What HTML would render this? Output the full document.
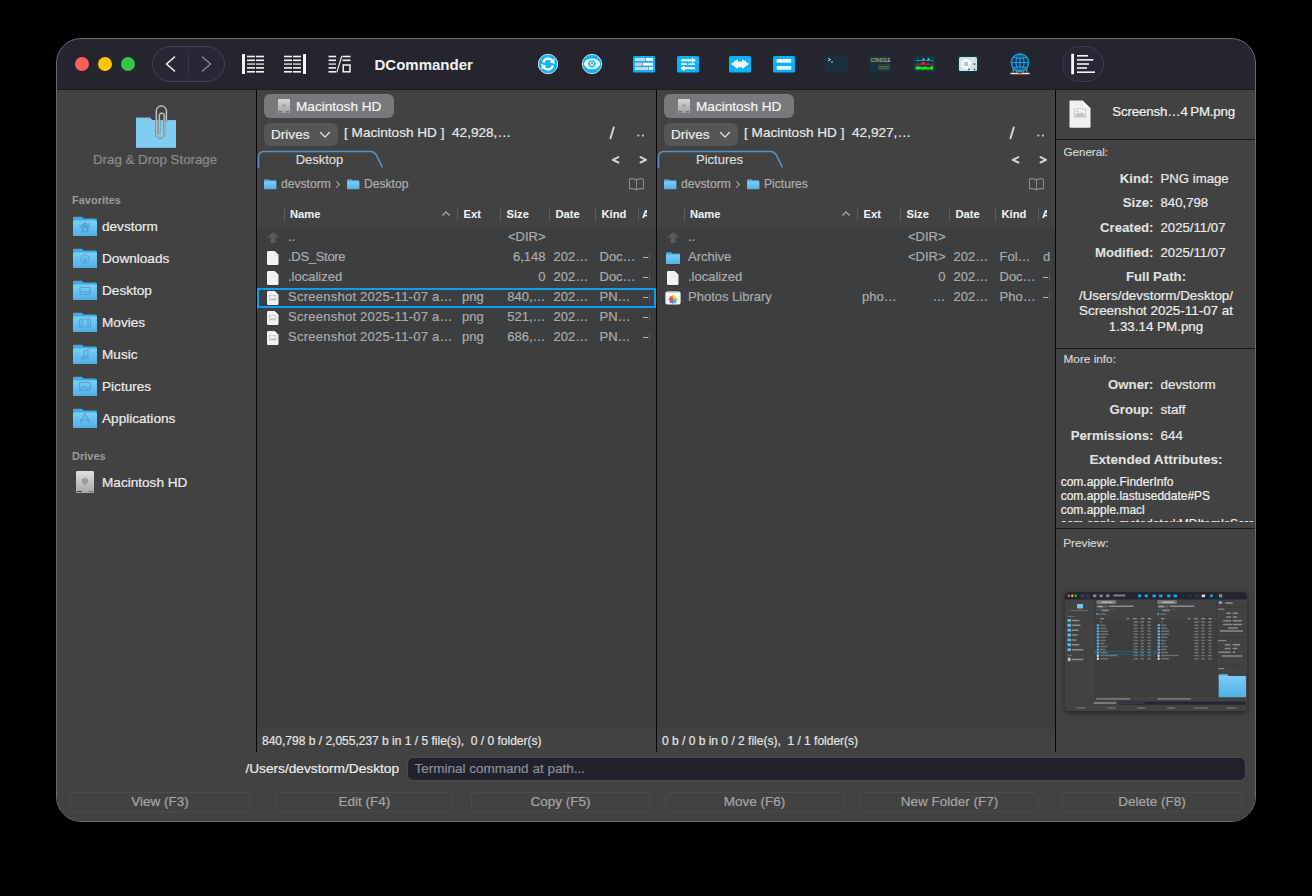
<!DOCTYPE html>
<html><head><meta charset="utf-8">
<style>
html,body{margin:0;padding:0}
body{width:1312px;height:896px;background:#000;position:relative;overflow:hidden;font-family:"Liberation Sans",sans-serif;color:#e6e6e6}
#win{position:absolute;left:57px;top:39px;width:1198px;height:782px;border-radius:24px;overflow:hidden;background:#424242}
#in{position:absolute;left:-57px;top:-39px;width:1312px;height:896px}
#border{position:absolute;left:56px;top:38px;width:1198px;height:782px;border:1px solid #6a6a6e;border-radius:25px;pointer-events:none}
.a{position:absolute}
.t{position:absolute;white-space:nowrap;line-height:20px;-webkit-text-stroke:0.2px currentColor}
.t[style*="font-weight:700"]{-webkit-text-stroke:0.05px currentColor}
.sep{position:absolute;background:#060606}
</style></head><body>
<div id="win"><div id="in">
  <!-- title bar -->
  <div class="a" style="left:0;top:39px;width:1312px;height:50px;background:#252530"></div>
  <div class="a" style="left:0;top:89px;width:1312px;height:1px;background:#1c1c1f"></div>

  <!-- sidebar -->
  <div class="a" style="left:57px;top:90px;width:199px;height:662px;background:#424242"></div>
  <!-- panels bg -->
  <div class="a" style="left:257px;top:90px;width:399px;height:137px;background:#424242"></div>
  <div class="a" style="left:257px;top:227px;width:399px;height:502px;background:#3d3e40"></div>
  <div class="a" style="left:657px;top:90px;width:398px;height:137px;background:#424242"></div>
  <div class="a" style="left:657px;top:227px;width:398px;height:502px;background:#3d3e40"></div>
  <div class="a" style="left:1056px;top:90px;width:199px;height:662px;background:#424242"></div>

  <!-- TITLEBAR CONTENT -->
  <svg class="a" style="left:0;top:39px" width="1312" height="50" viewBox="0 39 1312 50">
    <circle cx="82" cy="64" r="7" fill="#fe5f57"/>
    <circle cx="105" cy="64" r="7" fill="#fdc600"/>
    <circle cx="128" cy="64" r="7" fill="#33c748"/>
    <rect x="152.5" y="46.5" width="72" height="35" rx="17.5" fill="#272735" stroke="#40405e" stroke-width="1"/>
    <line x1="188.5" y1="54" x2="188.5" y2="74" stroke="#3c3c48" stroke-width="1"/>
    <polyline points="174.5,57 166.5,64 174.5,71" fill="none" stroke="#f2f2f2" stroke-width="1.6" stroke-linecap="round" stroke-linejoin="round"/>
    <polyline points="202.5,57 210.5,64 202.5,71" fill="none" stroke="#85858e" stroke-width="1.6" stroke-linecap="round" stroke-linejoin="round"/>
    <!-- icon1 -->
    <g fill="#f4f4f4">
      <rect x="242" y="54" width="3" height="20" rx="0.5"/>
      <rect x="247" y="55.7" width="8" height="1.6"/><rect x="256" y="55.7" width="8" height="1.6"/>
      <rect x="247" y="59.5" width="8" height="1.6"/><rect x="256" y="59.5" width="8" height="1.6"/>
      <rect x="247" y="63.3" width="8" height="1.6" fill="#c4c4c4"/><rect x="256" y="63.3" width="8" height="1.6" fill="#c4c4c4"/>
      <rect x="247" y="67.1" width="8" height="1.6"/><rect x="256" y="67.1" width="8" height="1.6"/>
      <rect x="247" y="71" width="8" height="1.6"/><rect x="256" y="71" width="8" height="1.6"/>
    </g>
    <!-- icon2 -->
    <g fill="#f4f4f4">
      <rect x="303" y="54" width="3" height="20" rx="0.5"/>
      <rect x="284" y="55.7" width="8" height="1.6"/><rect x="293" y="55.7" width="8" height="1.6"/>
      <rect x="284" y="59.5" width="8" height="1.6"/><rect x="293" y="59.5" width="8" height="1.6"/>
      <rect x="284" y="63.3" width="8" height="1.6" fill="#c4c4c4"/><rect x="293" y="63.3" width="8" height="1.6" fill="#c4c4c4"/>
      <rect x="284" y="67.1" width="8" height="1.6"/><rect x="293" y="67.1" width="8" height="1.6"/>
      <rect x="284" y="71" width="8" height="1.6"/><rect x="293" y="71" width="8" height="1.6"/>
    </g>
    <!-- icon3 -->
    <g fill="#f4f4f4">
      <rect x="328.5" y="55.7" width="7.5" height="1.6"/>
      <rect x="328.5" y="59.5" width="7.5" height="1.6"/>
      <rect x="328.5" y="63.3" width="7.5" height="1.6" fill="#c4c4c4"/>
      <rect x="328.5" y="67.1" width="7.5" height="1.6"/>
      <rect x="328.5" y="71" width="7.5" height="1.6"/>
      <rect x="342.5" y="55.7" width="8" height="1.6"/>
      <rect x="342.5" y="59.5" width="8" height="1.6"/>
      <rect x="343.2" y="65" width="6.8" height="6.8" fill="none" stroke="#f4f4f4" stroke-width="1.5"/>
    </g>
    <line x1="336.8" y1="72.3" x2="341.8" y2="56" stroke="#f4f4f4" stroke-width="1.1"/>
    <!-- refresh -->
    <circle cx="548" cy="64" r="9.7" fill="#0ab2fb" stroke="#ece8e4" stroke-width="0.9"/>
    <path d="M543.2,62.6 A5,5 0 0 1 552.2,60.6" fill="none" stroke="#fff" stroke-width="2.5"/>
    <path d="M552.8,65.4 A5,5 0 0 1 543.8,67.4" fill="none" stroke="#fff" stroke-width="2.5"/>
    <polygon points="554.3,58.6 554.6,64 549.8,62.2" fill="#fff"/>
    <polygon points="541.7,69.4 541.4,64 546.2,65.8" fill="#fff"/>
    <!-- eye -->
    <circle cx="592" cy="64" r="9.7" fill="#0ab2fb" stroke="#ece8e4" stroke-width="0.9"/>
    <path d="M583.8,64 C585.8,56.8 598.2,56.8 600.2,64 C598.2,71.2 585.8,71.2 583.8,64Z" fill="#eef7fc"/>
    <circle cx="592" cy="63.8" r="2.9" fill="none" stroke="#0ab2fb" stroke-width="1.4"/>
    <circle cx="592" cy="63.5" r="1.1" fill="#0ab2fb"/>
    <!-- blue rect icons -->
    <g>
      <rect x="633" y="56" width="22" height="16.5" rx="1.5" fill="#0ab2fb"/>
      <rect x="635.2" y="58" width="17.6" height="2.8" fill="#fff"/><rect x="635.2" y="58" width="10.4" height="2.8" fill="#c9d3da"/><rect x="645.4" y="57.4" width="0.6" height="4" fill="#5a6870"/>
      <rect x="635.2" y="62.8" width="17.6" height="2.8" fill="#fff"/><rect x="635.2" y="62.8" width="7.2" height="2.8" fill="#bfcbd3"/><rect x="642.2" y="62.2" width="0.6" height="4" fill="#5a6870"/>
      <rect x="635.2" y="67" width="17.6" height="2.8" fill="#fff"/><rect x="635.2" y="67" width="13.4" height="2.8" fill="#c9d3da"/><rect x="648.4" y="66.4" width="0.6" height="4" fill="#5a6870"/>
    </g>
    <g>
      <rect x="677" y="56" width="22" height="16.5" rx="1.5" fill="#0ab2fb"/>
      <rect x="681" y="59.3" width="11.5" height="2" fill="#fff"/><polygon points="692,57.6 696,60.3 692,63" fill="#fff"/>
      <rect x="681" y="63.3" width="6" height="1.6" fill="#fff"/><rect x="688.5" y="63.3" width="6.5" height="1.6" fill="#fff"/>
      <rect x="684" y="67.2" width="11" height="2" fill="#fff"/><polygon points="684.5,65.5 680.5,68.2 684.5,71" fill="#fff"/>
    </g>
    <g>
      <rect x="729" y="56" width="22" height="16.5" rx="1.5" fill="#0ab2fb"/>
      <polygon points="730.7,64.1 737.9,59 737.9,61.6 742.2,61.6 742.2,59 749.2,64.1 742.2,69.1 742.2,67.2 737.9,67.2 737.9,69.1" fill="#eef4f8"/>
    </g>
    <g>
      <rect x="773" y="56" width="22" height="16.5" rx="1.5" fill="#0ab2fb"/>
      <rect x="776.7" y="59" width="14.5" height="3.7" fill="#f6f9fb"/>
      <rect x="776.7" y="66" width="14.5" height="3.7" fill="#e6f0f6"/>
    </g>
    <!-- dark icons -->
    <g>
      <rect x="825.5" y="55.8" width="21.5" height="16.5" rx="1.5" fill="#183040" stroke="#22343e" stroke-width="0.6"/>
      <polyline points="828,58.3 830.5,59.6 828,61" fill="none" stroke="#e6eef2" stroke-width="0.9"/>
      <rect x="831" y="61.5" width="2" height="1" fill="#c8d0d4"/>
    </g>
    <g>
      <rect x="869.5" y="55.8" width="21.5" height="16.5" rx="1.5" fill="#183040" stroke="#22343e" stroke-width="0.6"/>
      <text x="870.6" y="62.4" font-family="Liberation Sans" font-size="5" fill="#e6de7c" textLength="19.6" lengthAdjust="spacingAndGlyphs">CONSOLE</text>
      <rect x="878.5" y="64.4" width="11" height="0.5" fill="#4d5a3a"/>
      <rect x="878.5" y="66" width="11" height="1" fill="#6a7440"/>
      <rect x="878.5" y="67.8" width="11" height="1" fill="#6a7440"/>
      <rect x="878.5" y="69.6" width="11" height="0.5" fill="#4d5a3a"/>
    </g>
    <g>
      <rect x="913.5" y="55.8" width="21.5" height="16.5" rx="1.5" fill="#183040" stroke="#22343e" stroke-width="0.6"/>
      <g stroke="#3d6a78" stroke-width="0.5"><line x1="918" y1="57" x2="918" y2="71"/><line x1="923" y1="57" x2="923" y2="71"/><line x1="928" y1="57" x2="928" y2="71"/><line x1="933" y1="57" x2="933" y2="71"/></g>
      <rect x="915.5" y="60" width="17.5" height="0.6" fill="#35c8d8"/>
      <path d="M922,60 L923.5,57.8 L925,60Z M927,60 L928.5,57.6 L930,60Z" fill="#35c8d8"/>
      <rect x="915.5" y="64.3" width="17.5" height="0.6" fill="#e01818"/>
      <path d="M920,64.5 Q922,60.8 924,62 Q925.5,62.5 926,64.5Z M926.5,64.5 Q928,61.5 930,64.5Z" fill="#ee1c1c"/>
      <path d="M915.5,69.4 L915.5,66.8 Q917,65.8 918.5,66.6 Q920,65.6 921,66.8 Q922.5,67.6 924.5,66.4 Q926,65.8 927,67.2 Q929,68 930.5,66.4 Q932,65.8 933,66.2 L933,69.4Z" fill="#18e818"/>
    </g>
    <g>
      <rect x="957.5" y="55.8" width="21.5" height="16.5" rx="1.5" fill="#183040" stroke="#22343e" stroke-width="0.6"/>
      <rect x="959" y="57" width="18" height="14" rx="1.5" fill="#d4e0ea"/>
      <circle cx="966" cy="64" r="5.2" fill="#f4f8fb"/>
      <circle cx="966" cy="64" r="1.6" fill="none" stroke="#6a8296" stroke-width="0.8"/>
      <circle cx="974.5" cy="64" r="0.95" fill="#3f5a72"/>
      <circle cx="969" cy="69.5" r="0.9" fill="#3f5a72"/>
      <circle cx="974.5" cy="69.5" r="0.9" fill="#3f5a72"/>
    </g>
    <!-- globe -->
    <g>
      <rect x="1010.5" y="72.8" width="19" height="1.5" fill="#e6d8d2"/>
      <rect x="1018.8" y="72.8" width="2.4" height="1.5" fill="#e05040"/>
      <g stroke="#7ed0a8" stroke-width="0.8"><line x1="1013.3" y1="67" x2="1013.3" y2="73"/><line x1="1026.7" y1="67" x2="1026.7" y2="73"/><line x1="1016.3" y1="70" x2="1016.3" y2="73"/><line x1="1023.7" y1="70" x2="1023.7" y2="73"/></g>
      <circle cx="1020" cy="62.6" r="8.7" fill="#1e8ed8" fill-opacity="0.18" stroke="#14a6f0" stroke-width="1.4"/>
      <g fill="none" stroke="#14a6f0" stroke-width="1">
        <ellipse cx="1020" cy="62.6" rx="4" ry="8.6"/>
        <line x1="1020" y1="54" x2="1020" y2="71.2"/>
        <line x1="1011.6" y1="62.6" x2="1028.4" y2="62.6"/>
        <path d="M1013.5,57.6 Q1020,59.4 1026.5,57.6"/>
        <path d="M1013.5,67.6 Q1020,65.8 1026.5,67.6"/>
      </g>
    </g>
    <!-- right pill -->
    <rect x="1062.5" y="46.5" width="41" height="35" rx="17.5" fill="#272735" stroke="#3c3c58" stroke-width="1"/>
    <g fill="#f4f4f4">
      <rect x="1071.2" y="53.8" width="2.8" height="20.5"/>
      <rect x="1077" y="55" width="11" height="1.6"/>
      <rect x="1077" y="59.1" width="16.4" height="1.6"/>
      <rect x="1077" y="63.2" width="12" height="1.6"/>
      <rect x="1077" y="67.2" width="10" height="1.6"/>
      <rect x="1077" y="71.4" width="18" height="1.6"/>
    </g>
  </svg>
  <div class="t" style="left:374.5px;top:54.5px;font-size:15px;font-weight:700;color:#f0f0f0">DCommander</div>

  <!-- SIDEBAR CONTENT -->
  <svg class="a" style="left:0;top:0" width="256" height="500">
    <defs>
      <linearGradient id="gf" x1="0" y1="0" x2="0" y2="1"><stop offset="0" stop-color="#7bd0f7"/><stop offset="1" stop-color="#4fb0e6"/></linearGradient>
      <symbol id="fold" viewBox="0 0 24 19.5">
        <path d="M1.5,0 H8.5 L10.5,2 H22.5 Q24,2 24,3.5 V18 Q24,19.5 22.5,19.5 H1.5 Q0,19.5 0,18 V1.5 Q0,0 1.5,0Z" fill="#45a8df"/>
        <rect x="0" y="4" width="24" height="15.5" rx="1.5" fill="url(#gf)"/>
      </symbol>
    </defs>
    <!-- drag drop -->
    <path d="M137,117.5 H150 L152.5,120.3 H176 V147.6 H136 V118.5 Q136,117.5 137,117.5Z" fill="#7bc9f1"/>
    <rect x="136" y="120.3" width="40" height="27.3" fill="#7fcdf3"/>
    <path d="M166.4,120.5 V111 A5.05,5.05 0 0 0 156.3,111 V134 A3.95,3.95 0 0 0 164.2,134 V115.6 A2.45,2.45 0 0 0 159.3,115.6 V132.6" fill="none" stroke="#6a6a6a" stroke-width="2.1" stroke-linecap="round"/>
    <path d="M166.4,120.5 V111 A5.05,5.05 0 0 0 156.3,111 V134 A3.95,3.95 0 0 0 164.2,134 V115.6 A2.45,2.45 0 0 0 159.3,115.6 V132.6" fill="none" stroke="#dedede" stroke-width="0.9" stroke-linecap="round"/>
    <!-- folders -->
    <use href="#fold" x="73" y="216.5" width="24" height="19.5"/>
    <use href="#fold" x="73" y="248.5" width="24" height="19.5"/>
    <use href="#fold" x="73" y="280.5" width="24" height="19.5"/>
    <use href="#fold" x="73" y="312.5" width="24" height="19.5"/>
    <use href="#fold" x="73" y="344.5" width="24" height="19.5"/>
    <use href="#fold" x="73" y="376.5" width="24" height="19.5"/>
    <use href="#fold" x="73" y="408.5" width="24" height="19.5"/>
    <g fill="none" stroke="#3f9fd6" stroke-width="1.1" opacity="0.8">
      <path d="M79.5,227.5 L85,222.5 L90.5,227.5 M88.5,225.2 V223"/>
      <circle cx="85" cy="259" r="4.2"/><path d="M85,256.5 V261.5 M83,259.6 L85,261.5 L87,259.6"/>
      <rect x="80" y="287.5" width="10" height="7" rx="1"/><line x1="80" y1="292" x2="90" y2="292"/>
      <rect x="79.5" y="319" width="11" height="8" rx="1"/><line x1="82" y1="319" x2="82" y2="327"/><line x1="88" y1="319" x2="88" y2="327"/>
      <path d="M84,358 V351 L88,350 V357" /><circle cx="83" cy="358.2" r="1.2"/><circle cx="87" cy="357.2" r="1.2"/>
      <rect x="79.5" y="382.5" width="11" height="8" rx="1"/><path d="M80,390 L84,386 L87,389 L90,386.5"/>
      <path d="M85,413.5 L80.5,423 M85,413.5 L89.5,423 M80,420 H90"/>
    </g>
    <path d="M85,223.8 L81.6,226.8 V231.2 Q81.6,232.4 82.8,232.4 H87.2 Q88.4,232.4 88.4,231.2 V226.8Z" fill="#45a2d8" opacity="0.85"/><rect x="84.2" y="228.2" width="1.6" height="2.6" fill="#7ccaf2"/>
    <!-- HD icon -->
    <rect x="76" y="471" width="18" height="22" rx="1.5" fill="#bdbdbd"/>
    <rect x="76" y="471" width="18" height="22" rx="1.5" fill="url(#ghd)"/>
    <linearGradient id="ghd" x1="0" y1="0" x2="0" y2="1"><stop offset="0" stop-color="#e0e0e0"/><stop offset="1" stop-color="#a8a8a8"/></linearGradient>
    <path d="M85,478.6 C83.6,477.6 81.8,478.2 81.8,480.6 C81.8,482.8 83.2,484.8 84.2,484.8 C84.6,484.8 84.8,484.6 85,484.6 C85.2,484.6 85.4,484.8 85.8,484.8 C86.8,484.8 88.2,482.8 88.2,480.6 C88.2,478.2 86.4,477.6 85,478.6Z M85,478.2 C85,477 85.8,476.3 86.4,476.2 C86.4,477.4 85.6,478.1 85,478.2Z" fill="#9c9c9c"/>
    <rect x="77.2" y="491" width="4.8" height="1" fill="#3a3a3a"/><rect x="88.5" y="491" width="3" height="1" fill="#6a6a6a"/><rect x="91.8" y="491" width="0.9" height="1" fill="#3a3a3a"/>
  </svg>
  <div class="t" style="left:93px;top:150px;font-size:13.3px;color:#8c8c8c">Drag &amp; Drop Storage</div>
  <div class="t" style="left:72px;top:190px;font-size:11px;font-weight:700;color:#9a9a9a">Favorites</div>
  <div class="t" style="left:102px;top:216.5px;font-size:13.6px;color:#ececec">devstorm</div>
  <div class="t" style="left:102px;top:248.5px;font-size:13.6px;color:#ececec">Downloads</div>
  <div class="t" style="left:102px;top:280.5px;font-size:13.6px;color:#ececec">Desktop</div>
  <div class="t" style="left:102px;top:312.5px;font-size:13.6px;color:#ececec">Movies</div>
  <div class="t" style="left:102px;top:344.5px;font-size:13.6px;color:#ececec">Music</div>
  <div class="t" style="left:102px;top:376.5px;font-size:13.6px;color:#ececec">Pictures</div>
  <div class="t" style="left:102px;top:408.5px;font-size:13.6px;color:#ececec">Applications</div>
  <div class="t" style="left:72px;top:446px;font-size:11px;font-weight:700;color:#9a9a9a">Drives</div>
  <div class="t" style="left:102px;top:472.5px;font-size:13.6px;color:#ececec">Macintosh HD</div>

  <!-- PANELS START -->
  <div class="a" style="left:264px;top:94px;width:130px;height:24px;border-radius:6px;background:#79797d"></div>
  <svg class="a" style="left:278px;top:99px" width="12" height="14"><defs><linearGradient id="hg0" x1="0" y1="0" x2="0" y2="1"><stop offset="0" stop-color="#d8d8d8"/><stop offset="1" stop-color="#a0a0a0"/></linearGradient></defs><rect x="0" y="0" width="12" height="14" rx="1" fill="url(#hg0)"/><path d="M6,5.2 C5.1,4.6 4,5 4,6.5 C4,7.9 4.9,9.2 5.5,9.2 L6,9.1 L6.5,9.2 C7.1,9.2 8,7.9 8,6.5 C8,5 6.9,4.6 6,5.2Z" fill="#a8a8a8"/><rect x="0.8" y="12.4" width="3.2" height="0.8" fill="#3a3a3a"/><rect x="8" y="12.4" width="3" height="0.8" fill="#555"/></svg>
  <div class="t" style="left:296px;top:96.5px;font-size:13.6px;color:#f4f4f4">Macintosh HD</div>
  <div class="a" style="left:264px;top:123px;width:74px;height:23px;border-radius:6px;background:#565656"></div>
  <div class="t" style="left:271px;top:125.3px;font-size:13.6px;color:#ececec">Drives</div>
  <svg class="a" style="left:319px;top:131px" width="12" height="8"><polyline points="1.5,1.5 6,6 10.5,1.5" fill="none" stroke="#e0e0e0" stroke-width="1.4" stroke-linecap="round" stroke-linejoin="round"/></svg>
  <div class="t" style="left:344px;top:123px;font-size:13.6px;color:#e8e8e8">[ Macintosh HD ]&nbsp; 42,928,…</div>
  <svg class="a" style="left:605px;top:122px" width="45" height="20"><line x1="5.4" y1="16.4" x2="8.8" y2="5.4" stroke="#d4d4d4" stroke-width="1.9" stroke-linecap="round"/><circle cx="33.3" cy="13.6" r="1.15" fill="#c8c8c8"/><circle cx="37.9" cy="13.6" r="1.15" fill="#c8c8c8"/></svg>
  <svg class="a" style="left:257px;top:150px" width="130" height="20"><path d="M1.5,18 V7 Q1.5,1.5 7,1.5 H113 Q117,1.5 119,4.5 L125.5,17.5" fill="none" stroke="#4f93cf" stroke-width="1.6"/></svg>
  <div class="t" style="left:257px;width:125px;text-align:center;top:150px;font-size:13px;color:#dcdcdc">Desktop</div>
  <svg class="a" style="left:605px;top:150px" width="45" height="20"><polyline points="13.4,7.1 7.8,9.8 13.4,12.5" fill="none" stroke="#d4d4d4" stroke-width="2" stroke-linejoin="round" stroke-linecap="round"/><polyline points="35.5,7.1 41.1,9.8 35.5,12.5" fill="none" stroke="#d4d4d4" stroke-width="2" stroke-linejoin="round" stroke-linecap="round"/></svg>
  <svg class="a" style="left:264px;top:179px" width="12.5" height="10.5"><use href="#fold" x="0" y="0" width="12.5" height="10.5"/></svg>
  <div class="t" style="left:281px;top:174px;font-size:12.1px;color:#adadad">devstorm</div>
  <svg class="a" style="left:334.8px;top:180px" width="6" height="9"><polyline points="1.3,1.3 4.5,4.5 1.3,7.7" fill="none" stroke="#a0a0a0" stroke-width="1.1"/></svg>
  <svg class="a" style="left:347px;top:179px" width="12.5" height="10.5"><use href="#fold" x="0" y="0" width="12.5" height="10.5"/></svg>
  <div class="t" style="left:364px;top:174px;font-size:12.1px;color:#adadad">Desktop</div>
  <svg class="a" style="left:628.3px;top:177px" width="17" height="14"><path d="M8.5,3 Q5,1 1.5,2 V12 Q5,11 8.5,13 Q12,11 15.5,12 V2 Q12,1 8.5,3 V13" fill="none" stroke="#8a8a8a" stroke-width="1.1" stroke-linejoin="round"/></svg>
  <div class="a" style="left:284.0px;top:207px;width:1px;height:14px;background:#5a5a5a"></div>
  <div class="a" style="left:457.0px;top:207px;width:1px;height:14px;background:#5a5a5a"></div>
  <div class="a" style="left:500.0px;top:207px;width:1px;height:14px;background:#5a5a5a"></div>
  <div class="a" style="left:549.0px;top:207px;width:1px;height:14px;background:#5a5a5a"></div>
  <div class="a" style="left:595.0px;top:207px;width:1px;height:14px;background:#5a5a5a"></div>
  <div class="a" style="left:638.0px;top:207px;width:1px;height:14px;background:#5a5a5a"></div>
  <div class="t" style="left:290px;top:204px;font-size:11.2px;font-weight:700;color:#f2f2f2">Name</div>
  <svg class="a" style="left:441px;top:210px" width="10" height="7"><polyline points="1.5,5.5 5,2 8.5,5.5" fill="none" stroke="#a8a8a8" stroke-width="1.3"/></svg>
  <div class="t" style="left:463.5px;top:204px;font-size:11.2px;font-weight:700;color:#f2f2f2">Ext</div>
  <div class="t" style="left:506.5px;top:204px;font-size:11.2px;font-weight:700;color:#f2f2f2">Size</div>
  <div class="t" style="left:555.5px;top:204px;font-size:11.2px;font-weight:700;color:#f2f2f2">Date</div>
  <div class="t" style="left:601.5px;top:204px;font-size:11.2px;font-weight:700;color:#f2f2f2">Kind</div>
  <div class="a" style="left:642px;top:204px;width:5px;height:20px;overflow:hidden"><div class="t" style="left:0;top:0;font-size:11.2px;font-weight:700;color:#f2f2f2">A</div></div>
  <svg class="a" style="left:267px;top:232px" width="12" height="11"><path d="M6,0 L12,5.5 H8.5 V11 H3.5 V5.5 H0Z" fill="#5a5a5a"/></svg>
  <div class="t" style="left:288px;top:227px;font-size:13px;color:#ababab;">..</div>
  <div class="t" style="left:480px;width:65.5px;text-align:right;top:227px;font-size:13px;color:#ababab">&lt;DIR&gt;</div>
  <svg class="a" style="left:267.2px;top:251px" width="12" height="14"><path d="M1.2,0 H7.5 L11.5,4 V12.8 Q11.5,14 10.3,14 H1.2 Q0,14 0,12.8 V1.2 Q0,0 1.2,0Z" fill="#f2f2f2"/><path d="M7.5,0 V3 Q7.5,4 8.5,4 H11.5Z" fill="#ffffff"/><path d="M7.5,0 V3 Q7.5,4 8.5,4 H11.5" fill="none" stroke="#cfcfcf" stroke-width="0.4"/></svg>
  <div class="t" style="left:288px;top:247px;font-size:13px;color:#ababab;letter-spacing:-0.3px;">.DS_Store</div>
  <div class="t" style="left:480px;width:65.5px;text-align:right;top:247px;font-size:13px;color:#ababab">6,148</div>
  <div class="t" style="left:553.5px;top:247px;font-size:13px;color:#ababab">202…</div>
  <div class="t" style="left:599.5px;top:247px;font-size:13px;color:#ababab">Doc…</div>
  <div class="a" style="left:642.8px;top:256.8px;width:5.3px;height:1.3px;background:#b0b0b0"></div><div class="a" style="left:649.3px;top:254.2px;width:1px;height:6.6px;background:#585858"></div>
  <svg class="a" style="left:267.2px;top:271px" width="12" height="14"><path d="M1.2,0 H7.5 L11.5,4 V12.8 Q11.5,14 10.3,14 H1.2 Q0,14 0,12.8 V1.2 Q0,0 1.2,0Z" fill="#f2f2f2"/><path d="M7.5,0 V3 Q7.5,4 8.5,4 H11.5Z" fill="#ffffff"/><path d="M7.5,0 V3 Q7.5,4 8.5,4 H11.5" fill="none" stroke="#cfcfcf" stroke-width="0.4"/></svg>
  <div class="t" style="left:288px;top:267px;font-size:13px;color:#ababab;">.localized</div>
  <div class="t" style="left:480px;width:65.5px;text-align:right;top:267px;font-size:13px;color:#ababab">0</div>
  <div class="t" style="left:553.5px;top:267px;font-size:13px;color:#ababab">202…</div>
  <div class="t" style="left:599.5px;top:267px;font-size:13px;color:#ababab">Doc…</div>
  <div class="a" style="left:642.8px;top:276.8px;width:5.3px;height:1.3px;background:#b0b0b0"></div><div class="a" style="left:649.3px;top:274.2px;width:1px;height:6.6px;background:#585858"></div>
  <svg class="a" style="left:267.2px;top:291px" width="12" height="14"><path d="M1.2,0 H7.5 L11.5,4 V12.8 Q11.5,14 10.3,14 H1.2 Q0,14 0,12.8 V1.2 Q0,0 1.2,0Z" fill="#f0f0f0"/><path d="M7.5,0 V3 Q7.5,4 8.5,4 H11.5Z" fill="#ffffff"/><rect x="2.6" y="4.3" width="6.3" height="4.6" fill="none" stroke="#c6c6c6" stroke-width="0.8"/><path d="M2.6,8.9 L4.6,6.9 L6,7.9 L7.2,6.8 L8.9,8.9Z" fill="#bdbdbd"/></svg>
  <div class="t" style="left:288px;top:287px;font-size:13px;color:#ababab;letter-spacing:0.25px;">Screenshot 2025-11-07 a…</div>
  <div class="t" style="left:462px;top:287px;font-size:13px;color:#ababab">png</div>
  <div class="t" style="left:480px;width:65.5px;text-align:right;top:287px;font-size:13px;color:#ababab">840,…</div>
  <div class="t" style="left:553.5px;top:287px;font-size:13px;color:#ababab">202…</div>
  <div class="t" style="left:599.5px;top:287px;font-size:13px;color:#ababab">PN…</div>
  <div class="a" style="left:642.8px;top:296.8px;width:5.3px;height:1.3px;background:#b0b0b0"></div><div class="a" style="left:649.3px;top:294.2px;width:1px;height:6.6px;background:#585858"></div>
  <svg class="a" style="left:267.2px;top:311px" width="12" height="14"><path d="M1.2,0 H7.5 L11.5,4 V12.8 Q11.5,14 10.3,14 H1.2 Q0,14 0,12.8 V1.2 Q0,0 1.2,0Z" fill="#f0f0f0"/><path d="M7.5,0 V3 Q7.5,4 8.5,4 H11.5Z" fill="#ffffff"/><rect x="2.6" y="4.3" width="6.3" height="4.6" fill="none" stroke="#c6c6c6" stroke-width="0.8"/><path d="M2.6,8.9 L4.6,6.9 L6,7.9 L7.2,6.8 L8.9,8.9Z" fill="#bdbdbd"/></svg>
  <div class="t" style="left:288px;top:307px;font-size:13px;color:#ababab;letter-spacing:0.25px;">Screenshot 2025-11-07 a…</div>
  <div class="t" style="left:462px;top:307px;font-size:13px;color:#ababab">png</div>
  <div class="t" style="left:480px;width:65.5px;text-align:right;top:307px;font-size:13px;color:#ababab">521,…</div>
  <div class="t" style="left:553.5px;top:307px;font-size:13px;color:#ababab">202…</div>
  <div class="t" style="left:599.5px;top:307px;font-size:13px;color:#ababab">PN…</div>
  <div class="a" style="left:642.8px;top:316.8px;width:5.3px;height:1.3px;background:#b0b0b0"></div><div class="a" style="left:649.3px;top:314.2px;width:1px;height:6.6px;background:#585858"></div>
  <svg class="a" style="left:267.2px;top:331px" width="12" height="14"><path d="M1.2,0 H7.5 L11.5,4 V12.8 Q11.5,14 10.3,14 H1.2 Q0,14 0,12.8 V1.2 Q0,0 1.2,0Z" fill="#f0f0f0"/><path d="M7.5,0 V3 Q7.5,4 8.5,4 H11.5Z" fill="#ffffff"/><rect x="2.6" y="4.3" width="6.3" height="4.6" fill="none" stroke="#c6c6c6" stroke-width="0.8"/><path d="M2.6,8.9 L4.6,6.9 L6,7.9 L7.2,6.8 L8.9,8.9Z" fill="#bdbdbd"/></svg>
  <div class="t" style="left:288px;top:327px;font-size:13px;color:#ababab;letter-spacing:0.25px;">Screenshot 2025-11-07 a…</div>
  <div class="t" style="left:462px;top:327px;font-size:13px;color:#ababab">png</div>
  <div class="t" style="left:480px;width:65.5px;text-align:right;top:327px;font-size:13px;color:#ababab">686,…</div>
  <div class="t" style="left:553.5px;top:327px;font-size:13px;color:#ababab">202…</div>
  <div class="t" style="left:599.5px;top:327px;font-size:13px;color:#ababab">PN…</div>
  <div class="a" style="left:642.8px;top:336.8px;width:5.3px;height:1.3px;background:#b0b0b0"></div><div class="a" style="left:649.3px;top:334.2px;width:1px;height:6.6px;background:#585858"></div>
  <div class="a" style="left:257px;top:288px;width:395px;height:16px;border:2px solid #0a9ef5"></div>
  <div class="t" style="left:262px;top:731px;font-size:12px;color:#e4e4e4">840,798 b / 2,055,237 b in 1 / 5 file(s),&nbsp; 0 / 0 folder(s)</div>
  <div class="a" style="left:664px;top:94px;width:130px;height:24px;border-radius:6px;background:#79797d"></div>
  <svg class="a" style="left:678px;top:99px" width="12" height="14"><defs><linearGradient id="hg400" x1="0" y1="0" x2="0" y2="1"><stop offset="0" stop-color="#d8d8d8"/><stop offset="1" stop-color="#a0a0a0"/></linearGradient></defs><rect x="0" y="0" width="12" height="14" rx="1" fill="url(#hg400)"/><path d="M6,5.2 C5.1,4.6 4,5 4,6.5 C4,7.9 4.9,9.2 5.5,9.2 L6,9.1 L6.5,9.2 C7.1,9.2 8,7.9 8,6.5 C8,5 6.9,4.6 6,5.2Z" fill="#a8a8a8"/><rect x="0.8" y="12.4" width="3.2" height="0.8" fill="#3a3a3a"/><rect x="8" y="12.4" width="3" height="0.8" fill="#555"/></svg>
  <div class="t" style="left:696px;top:96.5px;font-size:13.6px;color:#f4f4f4">Macintosh HD</div>
  <div class="a" style="left:664px;top:123px;width:74px;height:23px;border-radius:6px;background:#565656"></div>
  <div class="t" style="left:671px;top:125.3px;font-size:13.6px;color:#ececec">Drives</div>
  <svg class="a" style="left:719px;top:131px" width="12" height="8"><polyline points="1.5,1.5 6,6 10.5,1.5" fill="none" stroke="#e0e0e0" stroke-width="1.4" stroke-linecap="round" stroke-linejoin="round"/></svg>
  <div class="t" style="left:744px;top:123px;font-size:13.6px;color:#e8e8e8">[ Macintosh HD ]&nbsp; 42,927,…</div>
  <svg class="a" style="left:1005px;top:122px" width="45" height="20"><line x1="5.4" y1="16.4" x2="8.8" y2="5.4" stroke="#d4d4d4" stroke-width="1.9" stroke-linecap="round"/><circle cx="33.3" cy="13.6" r="1.15" fill="#c8c8c8"/><circle cx="37.9" cy="13.6" r="1.15" fill="#c8c8c8"/></svg>
  <svg class="a" style="left:657px;top:150px" width="130" height="20"><path d="M1.5,18 V7 Q1.5,1.5 7,1.5 H113 Q117,1.5 119,4.5 L125.5,17.5" fill="none" stroke="#4f93cf" stroke-width="1.6"/></svg>
  <div class="t" style="left:657px;width:125px;text-align:center;top:150px;font-size:13px;color:#dcdcdc">Pictures</div>
  <svg class="a" style="left:1005px;top:150px" width="45" height="20"><polyline points="13.4,7.1 7.8,9.8 13.4,12.5" fill="none" stroke="#d4d4d4" stroke-width="2" stroke-linejoin="round" stroke-linecap="round"/><polyline points="35.5,7.1 41.1,9.8 35.5,12.5" fill="none" stroke="#d4d4d4" stroke-width="2" stroke-linejoin="round" stroke-linecap="round"/></svg>
  <svg class="a" style="left:664px;top:179px" width="12.5" height="10.5"><use href="#fold" x="0" y="0" width="12.5" height="10.5"/></svg>
  <div class="t" style="left:681px;top:174px;font-size:12.1px;color:#adadad">devstorm</div>
  <svg class="a" style="left:734.8px;top:180px" width="6" height="9"><polyline points="1.3,1.3 4.5,4.5 1.3,7.7" fill="none" stroke="#a0a0a0" stroke-width="1.1"/></svg>
  <svg class="a" style="left:747px;top:179px" width="12.5" height="10.5"><use href="#fold" x="0" y="0" width="12.5" height="10.5"/></svg>
  <div class="t" style="left:764px;top:174px;font-size:12.1px;color:#adadad">Pictures</div>
  <svg class="a" style="left:1028.3px;top:177px" width="17" height="14"><path d="M8.5,3 Q5,1 1.5,2 V12 Q5,11 8.5,13 Q12,11 15.5,12 V2 Q12,1 8.5,3 V13" fill="none" stroke="#8a8a8a" stroke-width="1.1" stroke-linejoin="round"/></svg>
  <div class="a" style="left:684.0px;top:207px;width:1px;height:14px;background:#5a5a5a"></div>
  <div class="a" style="left:857.0px;top:207px;width:1px;height:14px;background:#5a5a5a"></div>
  <div class="a" style="left:900.0px;top:207px;width:1px;height:14px;background:#5a5a5a"></div>
  <div class="a" style="left:949.0px;top:207px;width:1px;height:14px;background:#5a5a5a"></div>
  <div class="a" style="left:995.0px;top:207px;width:1px;height:14px;background:#5a5a5a"></div>
  <div class="a" style="left:1038.0px;top:207px;width:1px;height:14px;background:#5a5a5a"></div>
  <div class="t" style="left:690px;top:204px;font-size:11.2px;font-weight:700;color:#f2f2f2">Name</div>
  <svg class="a" style="left:841px;top:210px" width="10" height="7"><polyline points="1.5,5.5 5,2 8.5,5.5" fill="none" stroke="#a8a8a8" stroke-width="1.3"/></svg>
  <div class="t" style="left:863.5px;top:204px;font-size:11.2px;font-weight:700;color:#f2f2f2">Ext</div>
  <div class="t" style="left:906.5px;top:204px;font-size:11.2px;font-weight:700;color:#f2f2f2">Size</div>
  <div class="t" style="left:955.5px;top:204px;font-size:11.2px;font-weight:700;color:#f2f2f2">Date</div>
  <div class="t" style="left:1001.5px;top:204px;font-size:11.2px;font-weight:700;color:#f2f2f2">Kind</div>
  <div class="a" style="left:1042px;top:204px;width:5px;height:20px;overflow:hidden"><div class="t" style="left:0;top:0;font-size:11.2px;font-weight:700;color:#f2f2f2">A</div></div>
  <svg class="a" style="left:667px;top:232px" width="12" height="11"><path d="M6,0 L12,5.5 H8.5 V11 H3.5 V5.5 H0Z" fill="#5a5a5a"/></svg>
  <div class="t" style="left:688px;top:227px;font-size:13px;color:#ababab;">..</div>
  <div class="t" style="left:880px;width:65.5px;text-align:right;top:227px;font-size:13px;color:#ababab">&lt;DIR&gt;</div>
  <svg class="a" style="left:665.8px;top:252px" width="14.5" height="12.4"><use href="#fold" x="0" y="0" width="14.5" height="12.4" preserveAspectRatio="none"/></svg>
  <div class="t" style="left:688px;top:247px;font-size:13px;color:#ababab;">Archive</div>
  <div class="t" style="left:880px;width:65.5px;text-align:right;top:247px;font-size:13px;color:#ababab">&lt;DIR&gt;</div>
  <div class="t" style="left:953.5px;top:247px;font-size:13px;color:#ababab">202…</div>
  <div class="t" style="left:999.5px;top:247px;font-size:13px;color:#ababab">Fol…</div>
  <div class="a" style="left:1042px;top:247px;width:8px;height:20px;overflow:hidden"><div class="t" style="left:1px;top:0;font-size:13px;color:#ababab">d</div></div>
  <svg class="a" style="left:667.2px;top:271px" width="12" height="14"><path d="M1.2,0 H7.5 L11.5,4 V12.8 Q11.5,14 10.3,14 H1.2 Q0,14 0,12.8 V1.2 Q0,0 1.2,0Z" fill="#f2f2f2"/><path d="M7.5,0 V3 Q7.5,4 8.5,4 H11.5Z" fill="#ffffff"/><path d="M7.5,0 V3 Q7.5,4 8.5,4 H11.5" fill="none" stroke="#cfcfcf" stroke-width="0.4"/></svg>
  <div class="t" style="left:688px;top:267px;font-size:13px;color:#ababab;">.localized</div>
  <div class="t" style="left:880px;width:65.5px;text-align:right;top:267px;font-size:13px;color:#ababab">0</div>
  <div class="t" style="left:953.5px;top:267px;font-size:13px;color:#ababab">202…</div>
  <div class="t" style="left:999.5px;top:267px;font-size:13px;color:#ababab">Doc…</div>
  <div class="a" style="left:1042.8px;top:276.8px;width:5.3px;height:1.3px;background:#b0b0b0"></div><div class="a" style="left:1049.3px;top:274.2px;width:1px;height:6.6px;background:#585858"></div>
  <svg class="a" style="left:665.3px;top:291px" width="16" height="14"><rect x="0.4" y="0.6" width="15.2" height="13" rx="2" fill="#f6f6f6"/><rect x="2" y="0.6" width="12" height="1" fill="#f0c0a0"/><rect x="2" y="1.2" width="12" height="0.6" fill="#a8d8f0"/><ellipse cx="8" cy="6.2" rx="1.3" ry="2.1" fill="#f5a623" opacity="0.9" transform="rotate(0 8 8.6)"/><ellipse cx="8" cy="6.2" rx="1.3" ry="2.1" fill="#f8d81c" opacity="0.9" transform="rotate(45 8 8.6)"/><ellipse cx="8" cy="6.2" rx="1.3" ry="2.1" fill="#7ed321" opacity="0.9" transform="rotate(90 8 8.6)"/><ellipse cx="8" cy="6.2" rx="1.3" ry="2.1" fill="#2fb8a8" opacity="0.9" transform="rotate(135 8 8.6)"/><ellipse cx="8" cy="6.2" rx="1.3" ry="2.1" fill="#4a90e2" opacity="0.9" transform="rotate(180 8 8.6)"/><ellipse cx="8" cy="6.2" rx="1.3" ry="2.1" fill="#8a5ce6" opacity="0.9" transform="rotate(225 8 8.6)"/><ellipse cx="8" cy="6.2" rx="1.3" ry="2.1" fill="#d63aa0" opacity="0.9" transform="rotate(270 8 8.6)"/><ellipse cx="8" cy="6.2" rx="1.3" ry="2.1" fill="#ef3b3b" opacity="0.9" transform="rotate(315 8 8.6)"/></svg>
  <div class="t" style="left:688px;top:287px;font-size:13px;color:#ababab;">Photos Library</div>
  <div class="t" style="left:862px;top:287px;font-size:13px;color:#ababab">pho…</div>
  <div class="t" style="left:880px;width:65.5px;text-align:right;top:287px;font-size:13px;color:#ababab">…</div>
  <div class="t" style="left:953.5px;top:287px;font-size:13px;color:#ababab">202…</div>
  <div class="t" style="left:999.5px;top:287px;font-size:13px;color:#ababab">Pho…</div>
  <div class="a" style="left:1042.8px;top:296.8px;width:5.3px;height:1.3px;background:#b0b0b0"></div><div class="a" style="left:1049.3px;top:294.2px;width:1px;height:6.6px;background:#585858"></div>
  <div class="t" style="left:662px;top:731px;font-size:12px;color:#e4e4e4">0 b / 0 b in 0 / 2 file(s),&nbsp; 1 / 1 folder(s)</div>
  <!-- PANELS END -->
  <!-- INFO START -->
  <svg class="a" style="left:1069px;top:100px" width="22" height="29"><path d="M1.5,0.5 H13.5 L21.5,8.5 V26.5 Q21.5,27.8 20.2,27.8 H1.8 Q0.5,27.8 0.5,26.5 V1.5 Q0.5,0.5 1.5,0.5Z" fill="#f0f0f0"/><path d="M13.5,0.5 V8.5 H21.5Z" fill="#fafafa"/><path d="M13.5,0.5 V8.5 H21.5" fill="none" stroke="#dadada" stroke-width="0.4"/><rect x="5" y="8.4" width="12" height="9.2" rx="1" fill="#c4c4c4"/><rect x="5.8" y="9.2" width="10.4" height="6" fill="#f2f2f2"/><path d="M5.8,15.6 L9,12.5 L11,13.8 L13,12 L16.2,15.6Z" fill="#c4c4c4"/><circle cx="8.2" cy="11.3" r="0.9" fill="#bbbbbb"/></svg>
  <div class="t" style="left:1112.3px;top:101.5px;font-size:13.3px;color:#f0f0f0;letter-spacing:-0.15px">Screensh…4&thinsp;PM.png</div>
  <div class="a" style="left:1056px;top:139px;width:199px;height:1px;background:#1a1a1a"></div>
  <div class="t" style="left:1063.5px;top:142px;font-size:11.6px;color:#d4d4d4">General:</div>
  <div class="t" style="left:1056px;width:97.5px;text-align:right;top:168.6px;font-size:13.2px;font-weight:700;color:#e2e2e2">Kind:</div>
  <div class="t" style="left:1160.5px;top:168.6px;font-size:13.2px;color:#e8e8e8">PNG image</div>
  <div class="t" style="left:1056px;width:97.5px;text-align:right;top:193.4px;font-size:13.2px;font-weight:700;color:#e2e2e2">Size:</div>
  <div class="t" style="left:1160.5px;top:193.4px;font-size:13.2px;color:#e8e8e8">840,798</div>
  <div class="t" style="left:1056px;width:97.5px;text-align:right;top:218.4px;font-size:13.2px;font-weight:700;color:#e2e2e2">Created:</div>
  <div class="t" style="left:1160.5px;top:218.4px;font-size:13.2px;color:#e8e8e8">2025/11/07</div>
  <div class="t" style="left:1056px;width:97.5px;text-align:right;top:243.4px;font-size:13.2px;font-weight:700;color:#e2e2e2">Modified:</div>
  <div class="t" style="left:1160.5px;top:243.4px;font-size:13.2px;color:#e8e8e8">2025/11/07</div>
  <div class="t" style="left:1056px;width:200px;text-align:center;top:266.6px;font-size:13.2px;font-weight:700;color:#e2e2e2">Full Path:</div>
  <div class="t" style="left:1056px;width:200px;text-align:center;top:286.3px;font-size:13.4px;color:#ececec">/Users/devstorm/Desktop/</div>
  <div class="t" style="left:1056px;width:200px;text-align:center;top:301.4px;font-size:13.4px;color:#ececec">Screenshot 2025-11-07 at</div>
  <div class="t" style="left:1056px;width:200px;text-align:center;top:316.6px;font-size:13.4px;color:#ececec">1.33.14 PM.png</div>
  <div class="a" style="left:1056px;top:348px;width:199px;height:1px;background:#1a1a1a"></div>
  <div class="t" style="left:1063.5px;top:349.4px;font-size:11.8px;color:#d4d4d4">More info:</div>
  <div class="t" style="left:1040px;width:113.5px;text-align:right;top:375.3px;font-size:13.2px;font-weight:700;color:#e2e2e2">Owner:</div>
  <div class="t" style="left:1160.5px;top:375.3px;font-size:13.4px;color:#e8e8e8">devstorm</div>
  <div class="t" style="left:1040px;width:113.5px;text-align:right;top:400.3px;font-size:13.2px;font-weight:700;color:#e2e2e2">Group:</div>
  <div class="t" style="left:1160.5px;top:400.3px;font-size:13.4px;color:#e8e8e8">staff</div>
  <div class="t" style="left:1040px;width:113.5px;text-align:right;top:425.8px;font-size:13.2px;font-weight:700;color:#e2e2e2">Permissions:</div>
  <div class="t" style="left:1160.5px;top:425.8px;font-size:13.4px;color:#e8e8e8">644</div>
  <div class="t" style="left:1056px;width:200px;text-align:center;top:449.5px;font-size:13.6px;font-weight:700;color:#e2e2e2">Extended Attributes:</div>
  <div class="a" style="left:1056px;top:470px;width:199px;height:52px;overflow:hidden">
  <div class="t" style="left:4.7px;top:4.8px;line-height:14px;font-size:12px;color:#f0f0f0">com.apple.FinderInfo</div>
  <div class="t" style="left:4.7px;top:18.9px;line-height:14px;font-size:12px;color:#f0f0f0">com.apple.lastuseddate#PS</div>
  <div class="t" style="left:4.7px;top:33.0px;line-height:14px;font-size:12px;color:#f0f0f0">com.apple.macl</div>
  <div class="t" style="left:4.7px;top:47.099999999999994px;line-height:14px;font-size:12px;color:#f0f0f0">com.apple.metadata:kMDItemIsScreenCapture</div>
  </div>
  <div class="a" style="left:1056px;top:528px;width:199px;height:1px;background:#1a1a1a"></div>
  <div class="t" style="left:1063.2px;top:533px;font-size:11.8px;color:#d4d4d4">Preview:</div>
  <!-- PREVIEW START -->
<div class="a" style="left:1065px;top:592px;width:182px;height:119px;border-radius:4px;box-shadow:0 2px 5px rgba(0,0,0,0.45)"></div><div class="a" style="left:1065px;top:592px;width:182px;height:119px;overflow:hidden;border-radius:4px;filter:blur(0.4px)"><div class="a" style="left:0;top:0;width:1198px;height:782px;transform:scale(0.15192,0.15217);transform-origin:0 0">
<div class="a" style="left:0px;top:0px;width:1198px;height:782px;background:#424242;border-radius:24px"></div>
<div class="a" style="left:0px;top:0px;width:1198px;height:50px;background:#252530;border-radius:24px 24px 0 0"></div>
<div class="a" style="left:17px;top:17px;width:16px;height:16px;background:#fe5f57;border-radius:50%"></div>
<div class="a" style="left:40px;top:17px;width:16px;height:16px;background:#fdc600;border-radius:50%"></div>
<div class="a" style="left:63px;top:17px;width:16px;height:16px;background:#33c748;border-radius:50%"></div>
<div class="a" style="left:96px;top:8px;width:72px;height:35px;background:#2c2c3c;border-radius:18px;border:1px solid #3c3c58"></div>
<div class="a" style="left:110.0px;top:19.2px;width:7.5px;height:11.5px;background:#e0e0e0;opacity:0.45;border-radius:5.8px"></div>
<div class="a" style="left:146.0px;top:19.2px;width:7.5px;height:11.5px;background:#888;opacity:0.45;border-radius:5.8px"></div>
<div class="a" style="left:185px;top:16px;width:22px;height:18px;background:#d8d8d8;opacity:0.55"></div>
<div class="a" style="left:227px;top:16px;width:22px;height:18px;background:#d8d8d8;opacity:0.55"></div>
<div class="a" style="left:271px;top:16px;width:22px;height:18px;background:#d8d8d8;opacity:0.55"></div>
<div class="a" style="left:317.0px;top:17.2px;width:81.2px;height:11.5px;background:#f0f0f0;opacity:0.45;border-radius:5.8px"></div>
<div class="a" style="left:480px;top:14px;width:22px;height:22px;background:#0ab2fb;border-radius:50%"></div>
<div class="a" style="left:524px;top:14px;width:22px;height:22px;background:#0ab2fb;border-radius:50%"></div>
<div class="a" style="left:576px;top:17px;width:22px;height:17px;background:#0ab2fb;"></div>
<div class="a" style="left:620px;top:17px;width:22px;height:17px;background:#0ab2fb;"></div>
<div class="a" style="left:672px;top:17px;width:22px;height:17px;background:#0ab2fb;"></div>
<div class="a" style="left:716px;top:17px;width:22px;height:17px;background:#0ab2fb;"></div>
<div class="a" style="left:768px;top:17px;width:22px;height:17px;background:#183040;"></div>
<div class="a" style="left:812px;top:17px;width:22px;height:17px;background:#1d3a30;"></div>
<div class="a" style="left:856px;top:17px;width:22px;height:17px;background:#1d4a2a;"></div>
<div class="a" style="left:900px;top:17px;width:22px;height:17px;background:#dde3ea;"></div>
<div class="a" style="left:954px;top:15px;width:20px;height:20px;background:#14a6f0;border-radius:50%"></div>
<div class="a" style="left:1005px;top:8px;width:42px;height:35px;background:#2a2a3a;border-radius:18px"></div>
<div class="a" style="left:1014px;top:15px;width:20px;height:20px;background:#d0d0d0;opacity:0.6"></div>
<div class="a" style="left:199px;top:51px;width:1px;height:662px;background:#1a1a1a;"></div>
<div class="a" style="left:599px;top:51px;width:1px;height:662px;background:#1a1a1a;"></div>
<div class="a" style="left:998px;top:51px;width:1px;height:662px;background:#1a1a1a;"></div>
<div class="a" style="left:200px;top:188px;width:399px;height:502px;background:#3d3e40;"></div>
<div class="a" style="left:600px;top:188px;width:398px;height:502px;background:#3d3e40;"></div>
<div class="a" style="left:79px;top:79px;width:40px;height:29px;background:#72c6f0;"></div>
<div class="a" style="left:36.0px;top:116.3px;width:116.1px;height:9.4px;background:#8c8c8c;opacity:0.45;border-radius:4.7px"></div>
<div class="a" style="left:15.0px;top:157.0px;width:50.3px;height:7.9px;background:#9a9a9a;opacity:0.45;border-radius:4.0px"></div>
<div class="a" style="left:16px;top:177px;width:24px;height:19px;background:#5ab8ea;border-radius:2px"></div>
<div class="a" style="left:45.0px;top:182.1px;width:51.1px;height:9.8px;background:#ececec;opacity:0.45;border-radius:4.9px"></div>
<div class="a" style="left:16px;top:209px;width:24px;height:19px;background:#5ab8ea;border-radius:2px"></div>
<div class="a" style="left:45.0px;top:214.1px;width:57.5px;height:9.8px;background:#ececec;opacity:0.45;border-radius:4.9px"></div>
<div class="a" style="left:16px;top:241px;width:24px;height:19px;background:#5ab8ea;border-radius:2px"></div>
<div class="a" style="left:45.0px;top:246.1px;width:44.7px;height:9.8px;background:#ececec;opacity:0.45;border-radius:4.9px"></div>
<div class="a" style="left:16px;top:273px;width:24px;height:19px;background:#5ab8ea;border-radius:2px"></div>
<div class="a" style="left:45.0px;top:278.1px;width:38.4px;height:9.8px;background:#ececec;opacity:0.45;border-radius:4.9px"></div>
<div class="a" style="left:16px;top:305px;width:24px;height:19px;background:#5ab8ea;border-radius:2px"></div>
<div class="a" style="left:45.0px;top:310.1px;width:32.0px;height:9.8px;background:#ececec;opacity:0.45;border-radius:4.9px"></div>
<div class="a" style="left:16px;top:337px;width:24px;height:19px;background:#5ab8ea;border-radius:2px"></div>
<div class="a" style="left:45.0px;top:342.1px;width:51.1px;height:9.8px;background:#ececec;opacity:0.45;border-radius:4.9px"></div>
<div class="a" style="left:16px;top:369px;width:24px;height:19px;background:#5ab8ea;border-radius:2px"></div>
<div class="a" style="left:45.0px;top:374.1px;width:76.7px;height:9.8px;background:#ececec;opacity:0.45;border-radius:4.9px"></div>
<div class="a" style="left:15.0px;top:413.0px;width:33.5px;height:7.9px;background:#9a9a9a;opacity:0.45;border-radius:4.0px"></div>
<div class="a" style="left:19px;top:432px;width:18px;height:22px;background:#c0c0c0;"></div>
<div class="a" style="left:45.0px;top:438.1px;width:76.7px;height:9.8px;background:#ececec;opacity:0.45;border-radius:4.9px"></div>
<div class="a" style="left:207px;top:55px;width:130px;height:24px;background:#79797d;border-radius:6px"></div>
<div class="a" style="left:239.0px;top:62.1px;width:76.7px;height:9.8px;background:#f4f4f4;opacity:0.45;border-radius:4.9px"></div>
<div class="a" style="left:207px;top:84px;width:74px;height:23px;background:#565656;border-radius:6px"></div>
<div class="a" style="left:214.0px;top:90.1px;width:38.4px;height:9.8px;background:#ececec;opacity:0.45;border-radius:4.9px"></div>
<div class="a" style="left:287.0px;top:89.1px;width:166.2px;height:9.8px;background:#e8e8e8;opacity:0.45;border-radius:4.9px"></div>
<div class="a" style="left:202px;top:112px;width:124px;height:16px;background:transparent;border:1.6px solid #4f93cf;border-bottom:none;border-radius:6px 10px 0 0"></div>
<div class="a" style="left:240.0px;top:116.3px;width:48.9px;height:9.4px;background:#dcdcdc;opacity:0.45;border-radius:4.7px"></div>
<div class="a" style="left:207px;top:140px;width:12px;height:10px;background:#5ab8ea;"></div>
<div class="a" style="left:224.0px;top:140.6px;width:46.2px;height:8.9px;background:#adadad;opacity:0.45;border-radius:4.4px"></div>
<div class="a" style="left:233.0px;top:170.8px;width:24.0px;height:8.5px;background:#f2f2f2;opacity:0.45;border-radius:4.2px"></div>
<div class="a" style="left:406.0px;top:170.8px;width:18.0px;height:8.5px;background:#f2f2f2;opacity:0.45;border-radius:4.2px"></div>
<div class="a" style="left:449.0px;top:170.8px;width:24.0px;height:8.5px;background:#f2f2f2;opacity:0.45;border-radius:4.2px"></div>
<div class="a" style="left:498.0px;top:170.8px;width:24.0px;height:8.5px;background:#f2f2f2;opacity:0.45;border-radius:4.2px"></div>
<div class="a" style="left:544.0px;top:170.8px;width:24.0px;height:8.5px;background:#f2f2f2;opacity:0.45;border-radius:4.2px"></div>
<div class="a" style="left:231.0px;top:193.3px;width:12.2px;height:9.4px;background:#ababab;opacity:0.45;border-radius:4.7px"></div>
<div class="a" style="left:450.0px;top:193.3px;width:30.5px;height:9.4px;background:#ababab;opacity:0.45;border-radius:4.7px"></div>
<div class="a" style="left:496.0px;top:193.3px;width:24.4px;height:9.4px;background:#ababab;opacity:0.45;border-radius:4.7px"></div>
<div class="a" style="left:542.0px;top:193.3px;width:24.4px;height:9.4px;background:#ababab;opacity:0.45;border-radius:4.7px"></div>
<div class="a" style="left:209px;top:212px;width:16px;height:13px;background:#5ab8ea;"></div>
<div class="a" style="left:231.0px;top:213.3px;width:36.7px;height:9.4px;background:#ababab;opacity:0.45;border-radius:4.7px"></div>
<div class="a" style="left:450.0px;top:213.3px;width:30.5px;height:9.4px;background:#ababab;opacity:0.45;border-radius:4.7px"></div>
<div class="a" style="left:496.0px;top:213.3px;width:24.4px;height:9.4px;background:#ababab;opacity:0.45;border-radius:4.7px"></div>
<div class="a" style="left:542.0px;top:213.3px;width:24.4px;height:9.4px;background:#ababab;opacity:0.45;border-radius:4.7px"></div>
<div class="a" style="left:209px;top:232px;width:16px;height:13px;background:#5ab8ea;"></div>
<div class="a" style="left:231.0px;top:233.3px;width:42.8px;height:9.4px;background:#ababab;opacity:0.45;border-radius:4.7px"></div>
<div class="a" style="left:450.0px;top:233.3px;width:30.5px;height:9.4px;background:#ababab;opacity:0.45;border-radius:4.7px"></div>
<div class="a" style="left:496.0px;top:233.3px;width:24.4px;height:9.4px;background:#ababab;opacity:0.45;border-radius:4.7px"></div>
<div class="a" style="left:542.0px;top:233.3px;width:24.4px;height:9.4px;background:#ababab;opacity:0.45;border-radius:4.7px"></div>
<div class="a" style="left:209px;top:252px;width:16px;height:13px;background:#5ab8ea;"></div>
<div class="a" style="left:231.0px;top:253.3px;width:55.0px;height:9.4px;background:#ababab;opacity:0.45;border-radius:4.7px"></div>
<div class="a" style="left:450.0px;top:253.3px;width:30.5px;height:9.4px;background:#ababab;opacity:0.45;border-radius:4.7px"></div>
<div class="a" style="left:496.0px;top:253.3px;width:24.4px;height:9.4px;background:#ababab;opacity:0.45;border-radius:4.7px"></div>
<div class="a" style="left:542.0px;top:253.3px;width:24.4px;height:9.4px;background:#ababab;opacity:0.45;border-radius:4.7px"></div>
<div class="a" style="left:209px;top:272px;width:16px;height:13px;background:#5ab8ea;"></div>
<div class="a" style="left:231.0px;top:273.3px;width:55.0px;height:9.4px;background:#ababab;opacity:0.45;border-radius:4.7px"></div>
<div class="a" style="left:450.0px;top:273.3px;width:30.5px;height:9.4px;background:#ababab;opacity:0.45;border-radius:4.7px"></div>
<div class="a" style="left:496.0px;top:273.3px;width:24.4px;height:9.4px;background:#ababab;opacity:0.45;border-radius:4.7px"></div>
<div class="a" style="left:542.0px;top:273.3px;width:24.4px;height:9.4px;background:#ababab;opacity:0.45;border-radius:4.7px"></div>
<div class="a" style="left:209px;top:292px;width:16px;height:13px;background:#5ab8ea;"></div>
<div class="a" style="left:231.0px;top:293.3px;width:42.8px;height:9.4px;background:#ababab;opacity:0.45;border-radius:4.7px"></div>
<div class="a" style="left:450.0px;top:293.3px;width:30.5px;height:9.4px;background:#ababab;opacity:0.45;border-radius:4.7px"></div>
<div class="a" style="left:496.0px;top:293.3px;width:24.4px;height:9.4px;background:#ababab;opacity:0.45;border-radius:4.7px"></div>
<div class="a" style="left:542.0px;top:293.3px;width:24.4px;height:9.4px;background:#ababab;opacity:0.45;border-radius:4.7px"></div>
<div class="a" style="left:209px;top:312px;width:16px;height:13px;background:#5ab8ea;"></div>
<div class="a" style="left:231.0px;top:313.3px;width:36.7px;height:9.4px;background:#ababab;opacity:0.45;border-radius:4.7px"></div>
<div class="a" style="left:450.0px;top:313.3px;width:30.5px;height:9.4px;background:#ababab;opacity:0.45;border-radius:4.7px"></div>
<div class="a" style="left:496.0px;top:313.3px;width:24.4px;height:9.4px;background:#ababab;opacity:0.45;border-radius:4.7px"></div>
<div class="a" style="left:542.0px;top:313.3px;width:24.4px;height:9.4px;background:#ababab;opacity:0.45;border-radius:4.7px"></div>
<div class="a" style="left:209px;top:332px;width:16px;height:13px;background:#5ab8ea;"></div>
<div class="a" style="left:231.0px;top:333.3px;width:30.5px;height:9.4px;background:#ababab;opacity:0.45;border-radius:4.7px"></div>
<div class="a" style="left:450.0px;top:333.3px;width:30.5px;height:9.4px;background:#ababab;opacity:0.45;border-radius:4.7px"></div>
<div class="a" style="left:496.0px;top:333.3px;width:24.4px;height:9.4px;background:#ababab;opacity:0.45;border-radius:4.7px"></div>
<div class="a" style="left:542.0px;top:333.3px;width:24.4px;height:9.4px;background:#ababab;opacity:0.45;border-radius:4.7px"></div>
<div class="a" style="left:209px;top:352px;width:16px;height:13px;background:#5ab8ea;"></div>
<div class="a" style="left:231.0px;top:353.3px;width:48.9px;height:9.4px;background:#ababab;opacity:0.45;border-radius:4.7px"></div>
<div class="a" style="left:450.0px;top:353.3px;width:30.5px;height:9.4px;background:#ababab;opacity:0.45;border-radius:4.7px"></div>
<div class="a" style="left:496.0px;top:353.3px;width:24.4px;height:9.4px;background:#ababab;opacity:0.45;border-radius:4.7px"></div>
<div class="a" style="left:542.0px;top:353.3px;width:24.4px;height:9.4px;background:#ababab;opacity:0.45;border-radius:4.7px"></div>
<div class="a" style="left:209px;top:372px;width:16px;height:13px;background:#5ab8ea;"></div>
<div class="a" style="left:231.0px;top:373.3px;width:36.7px;height:9.4px;background:#ababab;opacity:0.45;border-radius:4.7px"></div>
<div class="a" style="left:450.0px;top:373.3px;width:30.5px;height:9.4px;background:#ababab;opacity:0.45;border-radius:4.7px"></div>
<div class="a" style="left:496.0px;top:373.3px;width:24.4px;height:9.4px;background:#ababab;opacity:0.45;border-radius:4.7px"></div>
<div class="a" style="left:542.0px;top:373.3px;width:24.4px;height:9.4px;background:#ababab;opacity:0.45;border-radius:4.7px"></div>
<div class="a" style="left:209px;top:392px;width:16px;height:13px;background:#5ab8ea;"></div>
<div class="a" style="left:231.0px;top:393.3px;width:48.9px;height:9.4px;background:#ababab;opacity:0.45;border-radius:4.7px"></div>
<div class="a" style="left:450.0px;top:393.3px;width:30.5px;height:9.4px;background:#ababab;opacity:0.45;border-radius:4.7px"></div>
<div class="a" style="left:496.0px;top:393.3px;width:24.4px;height:9.4px;background:#ababab;opacity:0.45;border-radius:4.7px"></div>
<div class="a" style="left:542.0px;top:393.3px;width:24.4px;height:9.4px;background:#ababab;opacity:0.45;border-radius:4.7px"></div>
<div class="a" style="left:210px;top:411px;width:12px;height:15px;background:#eeeeee;"></div>
<div class="a" style="left:231.0px;top:413.3px;width:116.1px;height:9.4px;background:#ababab;opacity:0.45;border-radius:4.7px"></div>
<div class="a" style="left:450.0px;top:413.3px;width:30.5px;height:9.4px;background:#ababab;opacity:0.45;border-radius:4.7px"></div>
<div class="a" style="left:496.0px;top:413.3px;width:24.4px;height:9.4px;background:#ababab;opacity:0.45;border-radius:4.7px"></div>
<div class="a" style="left:542.0px;top:413.3px;width:24.4px;height:9.4px;background:#ababab;opacity:0.45;border-radius:4.7px"></div>
<div class="a" style="left:210px;top:431px;width:12px;height:15px;background:#eeeeee;"></div>
<div class="a" style="left:231.0px;top:433.3px;width:55.0px;height:9.4px;background:#ababab;opacity:0.45;border-radius:4.7px"></div>
<div class="a" style="left:450.0px;top:433.3px;width:30.5px;height:9.4px;background:#ababab;opacity:0.45;border-radius:4.7px"></div>
<div class="a" style="left:496.0px;top:433.3px;width:24.4px;height:9.4px;background:#ababab;opacity:0.45;border-radius:4.7px"></div>
<div class="a" style="left:542.0px;top:433.3px;width:24.4px;height:9.4px;background:#ababab;opacity:0.45;border-radius:4.7px"></div>
<div class="a" style="left:200px;top:389px;width:395px;height:16px;background:transparent;border:2px solid #0a9ef5"></div>
<div class="a" style="left:205.0px;top:697.7px;width:225.6px;height:8.6px;background:#e4e4e4;opacity:0.45;border-radius:4.3px"></div>
<div class="a" style="left:607px;top:55px;width:130px;height:24px;background:#79797d;border-radius:6px"></div>
<div class="a" style="left:639.0px;top:62.1px;width:76.7px;height:9.8px;background:#f4f4f4;opacity:0.45;border-radius:4.9px"></div>
<div class="a" style="left:607px;top:84px;width:74px;height:23px;background:#565656;border-radius:6px"></div>
<div class="a" style="left:614.0px;top:90.1px;width:38.4px;height:9.8px;background:#ececec;opacity:0.45;border-radius:4.9px"></div>
<div class="a" style="left:687.0px;top:89.1px;width:166.2px;height:9.8px;background:#e8e8e8;opacity:0.45;border-radius:4.9px"></div>
<div class="a" style="left:602px;top:112px;width:124px;height:16px;background:transparent;border:1.6px solid #4f93cf;border-bottom:none;border-radius:6px 10px 0 0"></div>
<div class="a" style="left:640.0px;top:116.3px;width:48.9px;height:9.4px;background:#dcdcdc;opacity:0.45;border-radius:4.7px"></div>
<div class="a" style="left:607px;top:140px;width:12px;height:10px;background:#5ab8ea;"></div>
<div class="a" style="left:624.0px;top:140.6px;width:46.2px;height:8.9px;background:#adadad;opacity:0.45;border-radius:4.4px"></div>
<div class="a" style="left:633.0px;top:170.8px;width:24.0px;height:8.5px;background:#f2f2f2;opacity:0.45;border-radius:4.2px"></div>
<div class="a" style="left:806.0px;top:170.8px;width:18.0px;height:8.5px;background:#f2f2f2;opacity:0.45;border-radius:4.2px"></div>
<div class="a" style="left:849.0px;top:170.8px;width:24.0px;height:8.5px;background:#f2f2f2;opacity:0.45;border-radius:4.2px"></div>
<div class="a" style="left:898.0px;top:170.8px;width:24.0px;height:8.5px;background:#f2f2f2;opacity:0.45;border-radius:4.2px"></div>
<div class="a" style="left:944.0px;top:170.8px;width:24.0px;height:8.5px;background:#f2f2f2;opacity:0.45;border-radius:4.2px"></div>
<div class="a" style="left:631.0px;top:193.3px;width:12.2px;height:9.4px;background:#ababab;opacity:0.45;border-radius:4.7px"></div>
<div class="a" style="left:850.0px;top:193.3px;width:30.5px;height:9.4px;background:#ababab;opacity:0.45;border-radius:4.7px"></div>
<div class="a" style="left:896.0px;top:193.3px;width:24.4px;height:9.4px;background:#ababab;opacity:0.45;border-radius:4.7px"></div>
<div class="a" style="left:942.0px;top:193.3px;width:24.4px;height:9.4px;background:#ababab;opacity:0.45;border-radius:4.7px"></div>
<div class="a" style="left:609px;top:212px;width:16px;height:13px;background:#5ab8ea;"></div>
<div class="a" style="left:631.0px;top:213.3px;width:36.7px;height:9.4px;background:#ababab;opacity:0.45;border-radius:4.7px"></div>
<div class="a" style="left:850.0px;top:213.3px;width:30.5px;height:9.4px;background:#ababab;opacity:0.45;border-radius:4.7px"></div>
<div class="a" style="left:896.0px;top:213.3px;width:24.4px;height:9.4px;background:#ababab;opacity:0.45;border-radius:4.7px"></div>
<div class="a" style="left:942.0px;top:213.3px;width:24.4px;height:9.4px;background:#ababab;opacity:0.45;border-radius:4.7px"></div>
<div class="a" style="left:609px;top:232px;width:16px;height:13px;background:#5ab8ea;"></div>
<div class="a" style="left:631.0px;top:233.3px;width:42.8px;height:9.4px;background:#ababab;opacity:0.45;border-radius:4.7px"></div>
<div class="a" style="left:850.0px;top:233.3px;width:30.5px;height:9.4px;background:#ababab;opacity:0.45;border-radius:4.7px"></div>
<div class="a" style="left:896.0px;top:233.3px;width:24.4px;height:9.4px;background:#ababab;opacity:0.45;border-radius:4.7px"></div>
<div class="a" style="left:942.0px;top:233.3px;width:24.4px;height:9.4px;background:#ababab;opacity:0.45;border-radius:4.7px"></div>
<div class="a" style="left:609px;top:252px;width:16px;height:13px;background:#5ab8ea;"></div>
<div class="a" style="left:631.0px;top:253.3px;width:55.0px;height:9.4px;background:#ababab;opacity:0.45;border-radius:4.7px"></div>
<div class="a" style="left:850.0px;top:253.3px;width:30.5px;height:9.4px;background:#ababab;opacity:0.45;border-radius:4.7px"></div>
<div class="a" style="left:896.0px;top:253.3px;width:24.4px;height:9.4px;background:#ababab;opacity:0.45;border-radius:4.7px"></div>
<div class="a" style="left:942.0px;top:253.3px;width:24.4px;height:9.4px;background:#ababab;opacity:0.45;border-radius:4.7px"></div>
<div class="a" style="left:609px;top:272px;width:16px;height:13px;background:#5ab8ea;"></div>
<div class="a" style="left:631.0px;top:273.3px;width:55.0px;height:9.4px;background:#ababab;opacity:0.45;border-radius:4.7px"></div>
<div class="a" style="left:850.0px;top:273.3px;width:30.5px;height:9.4px;background:#ababab;opacity:0.45;border-radius:4.7px"></div>
<div class="a" style="left:896.0px;top:273.3px;width:24.4px;height:9.4px;background:#ababab;opacity:0.45;border-radius:4.7px"></div>
<div class="a" style="left:942.0px;top:273.3px;width:24.4px;height:9.4px;background:#ababab;opacity:0.45;border-radius:4.7px"></div>
<div class="a" style="left:609px;top:292px;width:16px;height:13px;background:#5ab8ea;"></div>
<div class="a" style="left:631.0px;top:293.3px;width:42.8px;height:9.4px;background:#ababab;opacity:0.45;border-radius:4.7px"></div>
<div class="a" style="left:850.0px;top:293.3px;width:30.5px;height:9.4px;background:#ababab;opacity:0.45;border-radius:4.7px"></div>
<div class="a" style="left:896.0px;top:293.3px;width:24.4px;height:9.4px;background:#ababab;opacity:0.45;border-radius:4.7px"></div>
<div class="a" style="left:942.0px;top:293.3px;width:24.4px;height:9.4px;background:#ababab;opacity:0.45;border-radius:4.7px"></div>
<div class="a" style="left:609px;top:312px;width:16px;height:13px;background:#5ab8ea;"></div>
<div class="a" style="left:631.0px;top:313.3px;width:36.7px;height:9.4px;background:#ababab;opacity:0.45;border-radius:4.7px"></div>
<div class="a" style="left:850.0px;top:313.3px;width:30.5px;height:9.4px;background:#ababab;opacity:0.45;border-radius:4.7px"></div>
<div class="a" style="left:896.0px;top:313.3px;width:24.4px;height:9.4px;background:#ababab;opacity:0.45;border-radius:4.7px"></div>
<div class="a" style="left:942.0px;top:313.3px;width:24.4px;height:9.4px;background:#ababab;opacity:0.45;border-radius:4.7px"></div>
<div class="a" style="left:609px;top:332px;width:16px;height:13px;background:#5ab8ea;"></div>
<div class="a" style="left:631.0px;top:333.3px;width:30.5px;height:9.4px;background:#ababab;opacity:0.45;border-radius:4.7px"></div>
<div class="a" style="left:850.0px;top:333.3px;width:30.5px;height:9.4px;background:#ababab;opacity:0.45;border-radius:4.7px"></div>
<div class="a" style="left:896.0px;top:333.3px;width:24.4px;height:9.4px;background:#ababab;opacity:0.45;border-radius:4.7px"></div>
<div class="a" style="left:942.0px;top:333.3px;width:24.4px;height:9.4px;background:#ababab;opacity:0.45;border-radius:4.7px"></div>
<div class="a" style="left:609px;top:352px;width:16px;height:13px;background:#5ab8ea;"></div>
<div class="a" style="left:631.0px;top:353.3px;width:48.9px;height:9.4px;background:#ababab;opacity:0.45;border-radius:4.7px"></div>
<div class="a" style="left:850.0px;top:353.3px;width:30.5px;height:9.4px;background:#ababab;opacity:0.45;border-radius:4.7px"></div>
<div class="a" style="left:896.0px;top:353.3px;width:24.4px;height:9.4px;background:#ababab;opacity:0.45;border-radius:4.7px"></div>
<div class="a" style="left:942.0px;top:353.3px;width:24.4px;height:9.4px;background:#ababab;opacity:0.45;border-radius:4.7px"></div>
<div class="a" style="left:609px;top:372px;width:16px;height:13px;background:#5ab8ea;"></div>
<div class="a" style="left:631.0px;top:373.3px;width:36.7px;height:9.4px;background:#ababab;opacity:0.45;border-radius:4.7px"></div>
<div class="a" style="left:850.0px;top:373.3px;width:30.5px;height:9.4px;background:#ababab;opacity:0.45;border-radius:4.7px"></div>
<div class="a" style="left:896.0px;top:373.3px;width:24.4px;height:9.4px;background:#ababab;opacity:0.45;border-radius:4.7px"></div>
<div class="a" style="left:942.0px;top:373.3px;width:24.4px;height:9.4px;background:#ababab;opacity:0.45;border-radius:4.7px"></div>
<div class="a" style="left:609px;top:392px;width:16px;height:13px;background:#5ab8ea;"></div>
<div class="a" style="left:631.0px;top:393.3px;width:48.9px;height:9.4px;background:#ababab;opacity:0.45;border-radius:4.7px"></div>
<div class="a" style="left:850.0px;top:393.3px;width:30.5px;height:9.4px;background:#ababab;opacity:0.45;border-radius:4.7px"></div>
<div class="a" style="left:896.0px;top:393.3px;width:24.4px;height:9.4px;background:#ababab;opacity:0.45;border-radius:4.7px"></div>
<div class="a" style="left:942.0px;top:393.3px;width:24.4px;height:9.4px;background:#ababab;opacity:0.45;border-radius:4.7px"></div>
<div class="a" style="left:610px;top:411px;width:12px;height:15px;background:#eeeeee;"></div>
<div class="a" style="left:631.0px;top:413.3px;width:116.1px;height:9.4px;background:#ababab;opacity:0.45;border-radius:4.7px"></div>
<div class="a" style="left:850.0px;top:413.3px;width:30.5px;height:9.4px;background:#ababab;opacity:0.45;border-radius:4.7px"></div>
<div class="a" style="left:896.0px;top:413.3px;width:24.4px;height:9.4px;background:#ababab;opacity:0.45;border-radius:4.7px"></div>
<div class="a" style="left:942.0px;top:413.3px;width:24.4px;height:9.4px;background:#ababab;opacity:0.45;border-radius:4.7px"></div>
<div class="a" style="left:610px;top:431px;width:12px;height:15px;background:#eeeeee;"></div>
<div class="a" style="left:631.0px;top:433.3px;width:55.0px;height:9.4px;background:#ababab;opacity:0.45;border-radius:4.7px"></div>
<div class="a" style="left:850.0px;top:433.3px;width:30.5px;height:9.4px;background:#ababab;opacity:0.45;border-radius:4.7px"></div>
<div class="a" style="left:896.0px;top:433.3px;width:24.4px;height:9.4px;background:#ababab;opacity:0.45;border-radius:4.7px"></div>
<div class="a" style="left:942.0px;top:433.3px;width:24.4px;height:9.4px;background:#ababab;opacity:0.45;border-radius:4.7px"></div>
<div class="a" style="left:605.0px;top:697.7px;width:225.6px;height:8.6px;background:#e4e4e4;opacity:0.45;border-radius:4.3px"></div>
<div class="a" style="left:1012px;top:61px;width:21px;height:17px;background:#5ab8ea;"></div>
<div class="a" style="left:1055.0px;top:67.2px;width:50.0px;height:9.6px;background:#f0f0f0;opacity:0.45;border-radius:4.8px"></div>
<div class="a" style="left:999px;top:100px;width:199px;height:1px;background:#1a1a1a;"></div>
<div class="a" style="left:1006.0px;top:108.8px;width:43.6px;height:8.4px;background:#d4d4d4;opacity:0.45;border-radius:4.2px"></div>
<div class="a" style="left:1060.0px;top:134.2px;width:33.5px;height:9.5px;background:#e2e2e2;opacity:0.45;border-radius:4.8px"></div>
<div class="a" style="left:1103.0px;top:134.2px;width:37.2px;height:9.5px;background:#e8e8e8;opacity:0.45;border-radius:4.8px"></div>
<div class="a" style="left:1060.0px;top:159.2px;width:33.5px;height:9.5px;background:#e2e2e2;opacity:0.45;border-radius:4.8px"></div>
<div class="a" style="left:1103.0px;top:159.2px;width:31.0px;height:9.5px;background:#e8e8e8;opacity:0.45;border-radius:4.8px"></div>
<div class="a" style="left:1040.0px;top:184.2px;width:53.6px;height:9.5px;background:#e2e2e2;opacity:0.45;border-radius:4.8px"></div>
<div class="a" style="left:1103.0px;top:184.2px;width:62.0px;height:9.5px;background:#e8e8e8;opacity:0.45;border-radius:4.8px"></div>
<div class="a" style="left:1040.0px;top:209.2px;width:60.3px;height:9.5px;background:#e2e2e2;opacity:0.45;border-radius:4.8px"></div>
<div class="a" style="left:1103.0px;top:209.2px;width:62.0px;height:9.5px;background:#e8e8e8;opacity:0.45;border-radius:4.8px"></div>
<div class="a" style="left:1070.0px;top:232.2px;width:67.0px;height:9.5px;background:#e2e2e2;opacity:0.45;border-radius:4.8px"></div>
<div class="a" style="left:1020.0px;top:252.2px;width:151.2px;height:9.6px;background:#ececec;opacity:0.45;border-radius:4.8px"></div>
<div class="a" style="left:999px;top:300px;width:199px;height:1px;background:#1a1a1a;"></div>
<div class="a" style="left:1006.0px;top:315.8px;width:55.5px;height:8.5px;background:#d4d4d4;opacity:0.45;border-radius:4.2px"></div>
<div class="a" style="left:1050.0px;top:341.2px;width:40.2px;height:9.5px;background:#e2e2e2;opacity:0.45;border-radius:4.8px"></div>
<div class="a" style="left:1103.0px;top:341.2px;width:50.4px;height:9.6px;background:#e8e8e8;opacity:0.45;border-radius:4.8px"></div>
<div class="a" style="left:1050.0px;top:366.2px;width:40.2px;height:9.5px;background:#e2e2e2;opacity:0.45;border-radius:4.8px"></div>
<div class="a" style="left:1103.0px;top:366.2px;width:31.5px;height:9.6px;background:#e8e8e8;opacity:0.45;border-radius:4.8px"></div>
<div class="a" style="left:1010.0px;top:391.2px;width:80.4px;height:9.5px;background:#e2e2e2;opacity:0.45;border-radius:4.8px"></div>
<div class="a" style="left:1103.0px;top:391.2px;width:18.9px;height:9.6px;background:#e8e8e8;opacity:0.45;border-radius:4.8px"></div>
<div class="a" style="left:1030.0px;top:415.1px;width:138.1px;height:9.8px;background:#e2e2e2;opacity:0.45;border-radius:4.9px"></div>
<div class="a" style="left:999px;top:480px;width:199px;height:1px;background:#1a1a1a;"></div>
<div class="a" style="left:1006.0px;top:499.8px;width:44.4px;height:8.5px;background:#d4d4d4;opacity:0.45;border-radius:4.2px"></div>
<div class="a" style="left:1012px;top:540px;width:62px;height:20px;background:#62bdee;border-radius:7px 7px 0 0"></div>
<div class="a" style="left:1012px;top:552px;width:180px;height:140px;background:#62bff0;border-radius:7px;background:linear-gradient(#78cdf6,#4fb0e6)"></div>
<div class="a" style="left:188.0px;top:724.1px;width:148.1px;height:9.9px;background:#ececec;opacity:0.45;border-radius:4.9px"></div>
<div class="a" style="left:351px;top:719px;width:837px;height:22px;background:#262633;border-radius:5px"></div>
<div class="a" style="left:357.0px;top:725.1px;width:171.3px;height:9.7px;background:#5a5a66;opacity:0.45;border-radius:4.9px"></div>
<div class="a" style="left:13px;top:753px;width:178px;height:17.5px;background:transparent;border:1px solid #4c4c4c;border-radius:5px"></div>
<div class="a" style="left:74.4px;top:757.6px;width:57.1px;height:9.7px;background:#a6a6a6;opacity:0.45;border-radius:4.9px"></div>
<div class="a" style="left:219px;top:753px;width:175px;height:17.5px;background:transparent;border:1px solid #4c4c4c;border-radius:5px"></div>
<div class="a" style="left:278.9px;top:757.6px;width:57.1px;height:9.7px;background:#a6a6a6;opacity:0.45;border-radius:4.9px"></div>
<div class="a" style="left:414px;top:753px;width:177px;height:17.5px;background:transparent;border:1px solid #4c4c4c;border-radius:5px"></div>
<div class="a" style="left:474.9px;top:757.6px;width:57.1px;height:9.7px;background:#a6a6a6;opacity:0.45;border-radius:4.9px"></div>
<div class="a" style="left:608px;top:753px;width:177px;height:17.5px;background:transparent;border:1px solid #4c4c4c;border-radius:5px"></div>
<div class="a" style="left:668.9px;top:757.6px;width:57.1px;height:9.7px;background:#a6a6a6;opacity:0.45;border-radius:4.9px"></div>
<div class="a" style="left:803px;top:753px;width:177px;height:17.5px;background:transparent;border:1px solid #4c4c4c;border-radius:5px"></div>
<div class="a" style="left:844.9px;top:757.6px;width:95.2px;height:9.7px;background:#a6a6a6;opacity:0.45;border-radius:4.9px"></div>
<div class="a" style="left:1005px;top:753px;width:178px;height:17.5px;background:transparent;border:1px solid #4c4c4c;border-radius:5px"></div>
<div class="a" style="left:1060.1px;top:757.6px;width:69.8px;height:9.7px;background:#a6a6a6;opacity:0.45;border-radius:4.9px"></div>
</div></div>
<!-- PREVIEW END -->
  <div class="t" style="left:245.4px;top:758.7px;font-size:13.7px;color:#ececec">/Users/devstorm/Desktop</div>
  <div class="a" style="left:408px;top:758px;width:837px;height:22px;border-radius:5px;background:#22222f;box-shadow:0 0 0 0.6px #525252"></div>
  <div class="t" style="left:414.6px;top:759px;font-size:13.5px;color:#8d8d98">Terminal command at path...</div>
  <div class="a" style="left:70px;top:792px;width:178px;height:17.5px;border:1px solid #4c4c4c;border-radius:5px"></div>
  <div class="t" style="left:70px;width:180px;text-align:center;top:791.5px;font-size:13.5px;color:#a6a6a6">View (F3)</div>
  <div class="a" style="left:276px;top:792px;width:175px;height:17.5px;border:1px solid #4c4c4c;border-radius:5px"></div>
  <div class="t" style="left:276px;width:177px;text-align:center;top:791.5px;font-size:13.5px;color:#a6a6a6">Edit (F4)</div>
  <div class="a" style="left:471px;top:792px;width:177px;height:17.5px;border:1px solid #4c4c4c;border-radius:5px"></div>
  <div class="t" style="left:471px;width:179px;text-align:center;top:791.5px;font-size:13.5px;color:#a6a6a6">Copy (F5)</div>
  <div class="a" style="left:665px;top:792px;width:177px;height:17.5px;border:1px solid #4c4c4c;border-radius:5px"></div>
  <div class="t" style="left:665px;width:179px;text-align:center;top:791.5px;font-size:13.5px;color:#a6a6a6">Move (F6)</div>
  <div class="a" style="left:860px;top:792px;width:177px;height:17.5px;border:1px solid #4c4c4c;border-radius:5px"></div>
  <div class="t" style="left:860px;width:179px;text-align:center;top:791.5px;font-size:13.5px;color:#a6a6a6">New Folder (F7)</div>
  <div class="a" style="left:1062px;top:792px;width:178px;height:17.5px;border:1px solid #4c4c4c;border-radius:5px"></div>
  <div class="t" style="left:1062px;width:180px;text-align:center;top:791.5px;font-size:13.5px;color:#a6a6a6">Delete (F8)</div>
  <!-- INFO END -->
  <div class="sep" style="left:256px;top:90px;width:1px;height:662px"></div>
  <div class="sep" style="left:656px;top:90px;width:1px;height:662px"></div>
  <div class="sep" style="left:1055px;top:90px;width:1px;height:662px"></div>

</div></div>
<div id="border"></div>
</body></html>
